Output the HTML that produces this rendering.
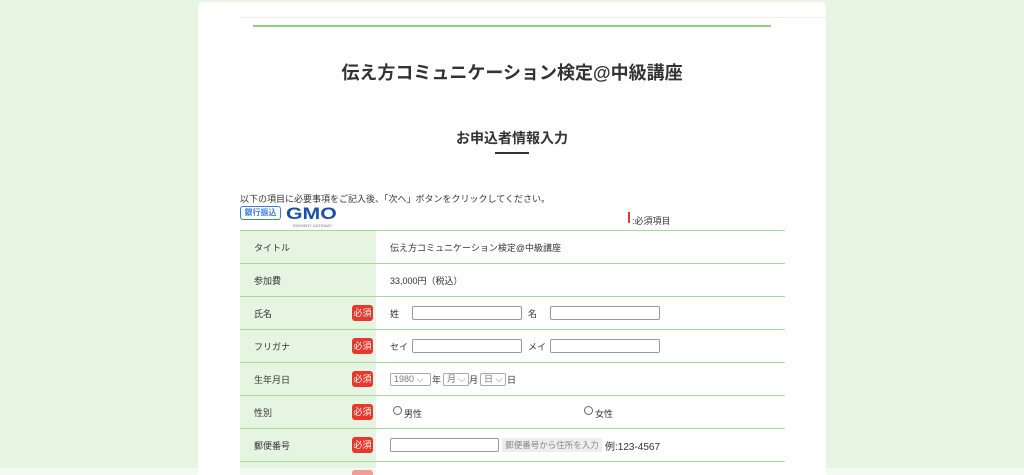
<!DOCTYPE html>
<html><head><meta charset="utf-8"><style>
*{margin:0;padding:0;box-sizing:border-box}
html,body{width:1024px;height:475px;overflow:hidden}
body{background:#e7f5e3;font-family:"Liberation Sans","Noto Sans CJK JP",sans-serif;color:#333;position:relative}
.a{position:absolute}
.panel{left:198px;top:2px;width:628px;height:473px;background:#fff;border-radius:6px 6px 0 0}
.t{font-size:9px;color:#333;white-space:nowrap}
.row{left:240px;width:545px;height:33px;border-top:1.5px solid #a8d99a;overflow:hidden}
.lab{position:absolute;left:0;top:0;width:136px;height:100%;background:#e6f5e1}
.lab span{position:absolute;left:14px;top:10px;font-size:9px}
.bd{position:absolute;left:112px;top:8px;width:21px;height:16px;background:#e8382d;border-radius:3px;color:#fff;font-size:9px;text-align:center;line-height:16px}
.val{position:absolute;left:150px;top:10px;font-size:9px;white-space:nowrap}
.in{position:absolute;height:14px;border:1px solid #999;border-radius:2px;background:#fff}
.sel{position:absolute;height:13px;border:1px solid #aaa;border-radius:2px;font-size:9px;color:#777;padding-left:3px;line-height:11px}
</style></head><body>
<div class="a panel"></div>
<div class="a" style="left:240px;top:17px;width:586px;height:1px;background:#eee"></div>
<div class="a" style="left:253px;top:25px;width:518px;height:2px;background:#8fd07e"></div>
<div class="a" style="left:0;width:1024px;top:59px;text-align:center;font-size:18px;font-weight:bold;color:#333">伝え方コミュニケーション検定@中級講座</div>
<div class="a" style="left:0;width:1024px;top:128px;text-align:center;font-size:14px;font-weight:bold;color:#333">お申込者情報入力</div>
<div class="a" style="left:495px;top:152px;width:34px;height:2px;background:#333"></div>
<div class="a t" style="left:240px;top:192px">以下の項目に必要事項をご記入後、「次へ」ボタンをクリックしてください。</div>
<div class="a" style="left:240px;top:206px;width:41px;height:14px;border:1.5px solid #3b7de0;border-radius:3px;font-size:8px;font-weight:bold;color:#3b7de0;text-align:center;line-height:11px">銀行振込</div>
<div class="a" style="left:286px;top:204px;font-size:17px;font-weight:bold;color:#1e4fa8;transform:scaleX(1.25);transform-origin:left;line-height:20px">GMO</div>
<div class="a" style="left:293px;top:223px;font-size:4px;color:#777">PAYMENT GATEWAY</div>
<div class="a" style="left:628px;top:212px;width:2px;height:11px;background:#e8382d"></div>
<div class="a t" style="left:632px;top:214px">:必須項目</div>

<div class="a row" style="top:230px"><div class="lab"><span>タイトル</span></div><div class="val">伝え方コミュニケーション検定@中級講座</div></div>
<div class="a row" style="top:263px"><div class="lab"><span>参加費</span></div><div class="val">33,000円（税込）</div></div>
<div class="a row" style="top:296px"><div class="lab"><span>氏名</span><div class="bd">必須</div></div><div class="val">姓</div><div class="in" style="left:172px;top:9px;width:110px"></div><div class="val" style="left:288px">名</div><div class="in" style="left:310px;top:9px;width:110px"></div></div>
<div class="a row" style="top:329px"><div class="lab"><span>フリガナ</span><div class="bd">必須</div></div><div class="val">セイ</div><div class="in" style="left:172px;top:9px;width:110px"></div><div class="val" style="left:288px">メイ</div><div class="in" style="left:310px;top:9px;width:110px"></div></div>
<div class="a row" style="top:362px"><div class="lab"><span>生年月日</span><div class="bd">必須</div></div>
<div class="sel" style="left:150px;top:10px;width:41px">1980 ⌵</div><div class="val" style="left:192px">年</div>
<div class="sel" style="left:203px;top:10px;width:26px">月 ⌵</div><div class="val" style="left:229px">月</div>
<div class="sel" style="left:240px;top:10px;width:26px">日 ⌵</div><div class="val" style="left:267px">日</div></div>
<div class="a row" style="top:395px"><div class="lab"><span>性別</span><div class="bd">必須</div></div>
<div class="a" style="left:153px;top:10px;width:9px;height:9px;border:1px solid #666;border-radius:50%"></div><div class="val" style="left:164px;top:11px">男性</div>
<div class="a" style="left:344px;top:10px;width:9px;height:9px;border:1px solid #666;border-radius:50%"></div><div class="val" style="left:355px;top:11px">女性</div></div>
<div class="a row" style="top:428px"><div class="lab"><span>郵便番号</span><div class="bd">必須</div></div>
<div class="in" style="left:150px;top:9px;width:109px"></div>
<div class="a" style="left:262px;top:9px;width:100px;height:14px;background:#eee;font-size:8.5px;color:#888;text-align:center;line-height:14px">郵便番号から住所を入力</div>
<div class="val" style="left:365px;top:9px;font-size:10px">例:123-4567</div></div>
<div class="a row" style="top:461px;height:14px"><div class="lab"></div><div class="bd"></div></div>
<div class="a" style="left:0;top:468px;width:1024px;height:7px;background:rgba(255,255,255,0.5)"></div>
</body></html>
